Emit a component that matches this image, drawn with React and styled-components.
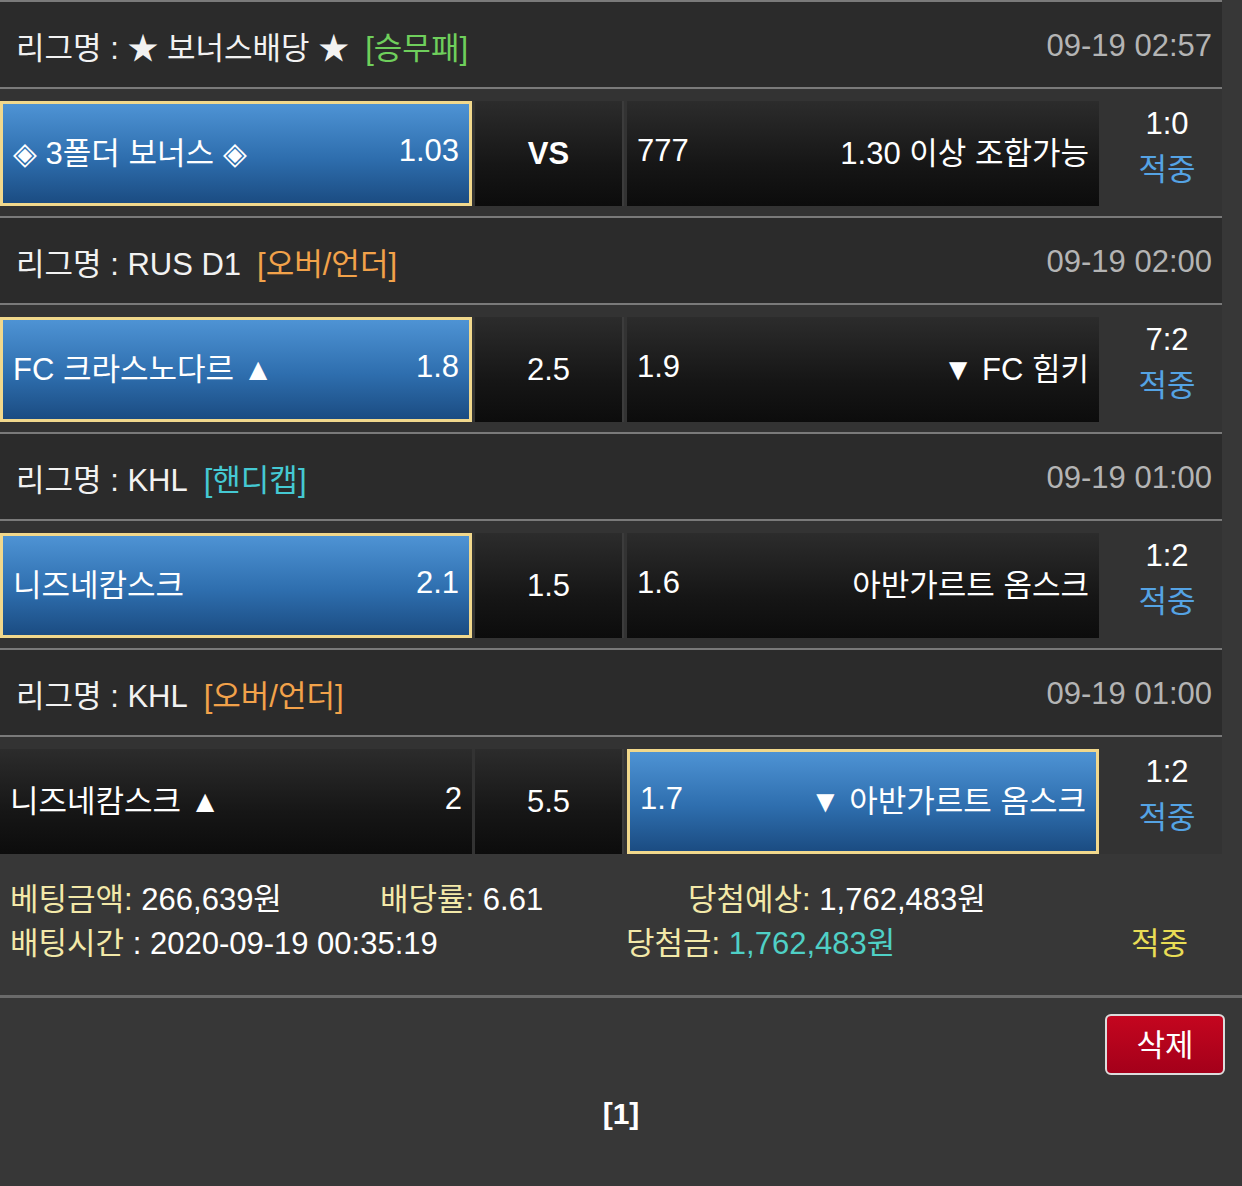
import React from "react";
import styled, { createGlobalStyle } from "styled-components";

const games = [
  {
    league: "★ 보너스배당 ★",
    type: "[승무패]",
    typeColor: "#6fcf5c",
    date: "09-19 02:57",
    home: "◈ 3폴더 보너스 ◈",
    homeOdds: "1.03",
    mid: "VS",
    awayOdds: "777",
    away: "1.30 이상 조합가능",
    score: "1:0",
    pick: "home",
  },
  {
    league: "RUS D1",
    type: "[오버/언더]",
    typeColor: "#f2a24a",
    date: "09-19 02:00",
    home: "FC 크라스노다르 ▲",
    homeOdds: "1.8",
    mid: "2.5",
    awayOdds: "1.9",
    away: "▼ FC 힘키",
    score: "7:2",
    pick: "home",
  },
  {
    league: "KHL",
    type: "[핸디캡]",
    typeColor: "#45c9d3",
    date: "09-19 01:00",
    home: "니즈네캄스크",
    homeOdds: "2.1",
    mid: "1.5",
    awayOdds: "1.6",
    away: "아반가르트 옴스크",
    score: "1:2",
    pick: "home",
  },
  {
    league: "KHL",
    type: "[오버/언더]",
    typeColor: "#f2a24a",
    date: "09-19 01:00",
    home: "니즈네캄스크 ▲",
    homeOdds: "2",
    mid: "5.5",
    awayOdds: "1.7",
    away: "▼ 아반가르트 옴스크",
    score: "1:2",
    pick: "away",
  },
];

const App = () => {
  return (
    <>
      <GlobalStyle />
      <StPage>
        <StList>
          {games.map((g, i) => (
            <React.Fragment key={i}>
              <StHeader>
                <StLeague>
                  리그명 : {g.league}
                  <StType $color={g.typeColor}>{g.type}</StType>
                </StLeague>
                <StDate>{g.date}</StDate>
              </StHeader>
              <StBetRow $last={i === games.length - 1}>
                <StTeam $picked={g.pick === "home"}>
                  <span>{g.home}</span>
                  <span>{g.homeOdds}</span>
                </StTeam>
                <StMid $bold={g.mid === "VS"}>{g.mid}</StMid>
                <StTeam $picked={g.pick === "away"}>
                  <span>{g.awayOdds}</span>
                  <span>{g.away}</span>
                </StTeam>
                <StScore>
                  <div>{g.score}</div>
                  <StHit>적중</StHit>
                </StScore>
              </StBetRow>
            </React.Fragment>
          ))}
        </StList>

        <StSummary>
          <StSumLine>
            <StSumItem $w="370px">
              <StLabel>베팅금액:</StLabel> 266,639원
            </StSumItem>
            <StSumItem $w="308px">
              <StLabel>배당률:</StLabel> 6.61
            </StSumItem>
            <StSumItem>
              <StLabel>당첨예상:</StLabel> 1,762,483원
            </StSumItem>
          </StSumLine>
          <StSumLine>
            <StSumItem $w="616px">
              <StLabel>배팅시간</StLabel> : 2020-09-19 00:35:19
            </StSumItem>
            <StSumItem $w="505px">
              <StLabel>당첨금:</StLabel> <StWin>1,762,483원</StWin>
            </StSumItem>
            <StSumItem>
              <StResult>적중</StResult>
            </StSumItem>
          </StSumLine>
        </StSummary>

        <StActions>
          <StDelete>삭제</StDelete>
        </StActions>
        <StPager>[1]</StPager>
      </StPage>
    </>
  );
};

export default App;

const GlobalStyle = createGlobalStyle`
  html, body {
    margin: 0;
    padding: 0;
    background: #373737;
  }
  body {
    font-family: "Liberation Sans", "Noto Sans CJK KR", sans-serif;
    color: #fff;
  }
`;

const StPage = styled.div`
  width: 1242px;
  min-height: 1186px;
  background: #373737;
  font-size: 31px;
`;

const StList = styled.div`
  width: 1222px;
`;

const StHeader = styled.div`
  display: flex;
  align-items: center;
  justify-content: space-between;
  height: 85px;
  box-sizing: content-box;
  padding: 0 10px 0 16px;
  background: #2b2b2b;
  border-top: 2px solid #7a7a7a;
  border-bottom: 2px solid #7a7a7a;
`;

const StLeague = styled.div`
  display: flex;
  align-items: center;
  color: #f2f2f2;
  padding-top: 2px;
`;

const StType = styled.span`
  color: ${(p) => p.$color};
  margin-left: 16px;
`;

const StDate = styled.div`
  color: #b4b4b4;
  padding-top: 2px;
`;

const StBetRow = styled.div`
  display: flex;
  gap: 3px;
  padding: 12px 0 ${(p) => (p.$last ? "0" : "10px")};
  background: #333333;
`;

const StTeam = styled.div`
  box-sizing: border-box;
  width: 472px;
  height: 105px;
  display: flex;
  align-items: center;
  justify-content: space-between;
  padding: 0 10px 6px;
  color: #fff;
  background: ${(p) =>
    p.$picked
      ? "linear-gradient(to bottom, #4e93d4 0%, #2e6eae 55%, #1b4c82 100%)"
      : "linear-gradient(to bottom, #2c2c2c 0%, #161616 60%, #0c0c0c 100%)"};
  border: ${(p) => (p.$picked ? "3px solid #f1d88c" : "none")};
`;

const StMid = styled.div`
  width: 149px;
  height: 105px;
  display: flex;
  align-items: center;
  justify-content: center;
  box-sizing: border-box;
  font-weight: ${(p) => (p.$bold ? 700 : 400)};
  background: linear-gradient(to bottom, #2c2c2c 0%, #161616 60%, #0c0c0c 100%);
  border-right: 2px solid #3c3c3c;
`;

const StScore = styled.div`
  flex: 1;
  height: 105px;
  display: flex;
  flex-direction: column;
  align-items: center;
  justify-content: center;
  line-height: 46px;
  padding: 0 0 14px 10px;
  box-sizing: border-box;
  color: #fff;
`;

const StHit = styled.div`
  color: #55a3e4;
`;

const StSummary = styled.div`
  padding: 24px 0 29px 10px;
  border-bottom: 3px solid #6a6a6a;
`;

const StSumLine = styled.div`
  display: flex;
  line-height: 44px;
  white-space: nowrap;
`;

const StSumItem = styled.div`
  width: ${(p) => p.$w || "auto"};
  color: #fff;
`;

const StLabel = styled.span`
  color: #f3e9a9;
`;

const StWin = styled.span`
  color: #4fd0c6;
`;

const StResult = styled.span`
  color: #e9dd55;
`;

const StActions = styled.div`
  display: flex;
  justify-content: flex-end;
  padding: 16px 17px 0 0;
`;

const StDelete = styled.button`
  width: 120px;
  height: 61px;
  border: 2px solid #dcdcdc;
  border-radius: 6px;
  background: linear-gradient(to bottom, #c4061f 0%, #a4001a 100%);
  color: #fff;
  font-family: inherit;
  font-size: 31px;
  padding: 0 0 4px;
  cursor: pointer;
`;

const StPager = styled.div`
  text-align: center;
  font-weight: 700;
  font-size: 30px;
  margin-top: 22px;
`;
